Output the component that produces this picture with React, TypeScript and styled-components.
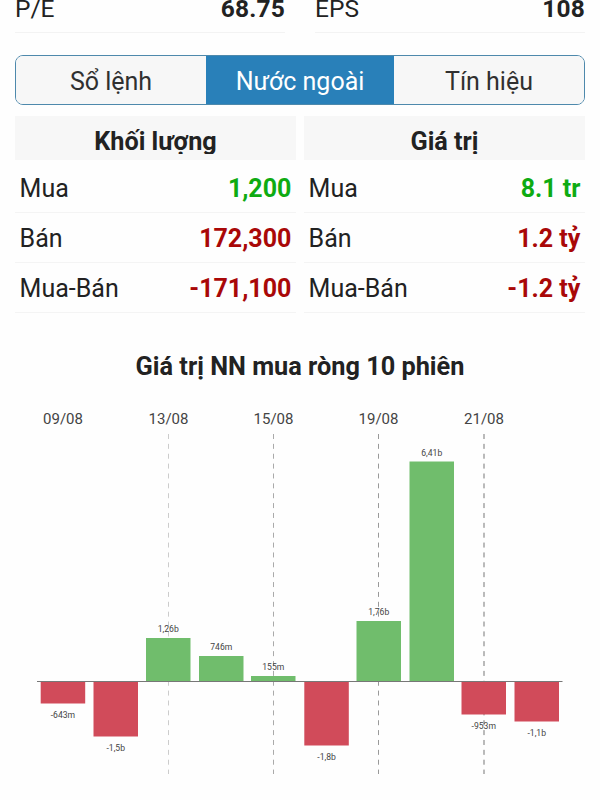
import React from "react";
import styled, { createGlobalStyle } from "styled-components";

const GlobalStyle = createGlobalStyle`
  * { box-sizing: border-box; }
  html, body { margin: 0; background: #fefefe; }
  body { font-family: Roboto, "Noto Sans", sans-serif; color: #222; overflow: hidden; }
`;

const Screen = styled.main`
  width: 600px;
  height: 800px;
  overflow: hidden;
  display: flex;
  flex-direction: column;
`;

const Ratios = styled.section`
  display: grid;
  grid-template-columns: 270px 270px;
  column-gap: 30px;
  padding: 0 15px;
  height: 33px;
`;

const Ratio = styled.div`
  display: flex;
  justify-content: space-between;
  height: 33px;
  border-bottom: 1px solid #f3f3f3;
  font-size: 24.5px;
  line-height: 28px;
`;

const RatioText = styled.span<{ $strong?: boolean }>`
  margin-top: -5px;
  font-weight: ${(p) => (p.$strong ? 700 : 400)};
  letter-spacing: ${(p) => (p.$strong ? "0.2px" : "0")};
`;

const Tabs = styled.nav`
  display: grid;
  grid-template-columns: 190px 188px 1fr;
  width: 570px;
  height: 50px;
  margin: 22px 0 0 15px;
  border: 1px solid #4e89ac;
  border-radius: 8px;
  overflow: hidden;
`;

const Tab = styled.button<{ $active?: boolean }>`
  border: 0;
  padding: 4px 0 0;
  font: 400 25px/44px Roboto, "Noto Sans", sans-serif;
  color: ${(p) => (p.$active ? "#fff" : "#303030")};
  background: ${(p) => (p.$active ? "#2980b9" : "#f7f7f7")};
`;

const Tables = styled.section`
  display: grid;
  grid-template-columns: 281px 281px;
  column-gap: 8px;
  margin: 11px 0 0 15px;
`;

const TableHead = styled.h2`
  margin: 0 0 3px;
  height: 44px;
  padding-top: 12px;
  text-align: center;
  background: #f7f7f7;
  font-size: 25.2px;
  line-height: 28px;
  font-weight: 700;
`;

const HeadText = styled.span`
  display: block;
  height: 26px;
  overflow: hidden;
`;

const Row = styled.div`
  display: flex;
  justify-content: space-between;
  height: 50px;
  padding: 2px 4.6px 0;
  border-bottom: 1px solid #f4f4f4;
  font-size: 25px;
  line-height: 48px;
`;

const Value = styled.strong<{ $tone: "up" | "down" }>`
  font-weight: 700;
  color: ${(p) => (p.$tone === "up" ? "#0eab12" : "#a90808")};
`;

const ChartTitle = styled.h1`
  margin: 40px 0 0;
  text-align: center;
  font-size: 25.3px;
  line-height: 28px;
  font-weight: 700;
`;

const Chart = styled.svg`
  display: block;
  width: 600px;
  height: 400px;
  margin-top: 19px;
  flex: none;
`;

const DateLabel = styled.text`
  font-size: 15px;
  fill: #444;
  text-anchor: middle;
`;

const BarLabel = styled.text`
  font-size: 8.6px;
  fill: #444;
  text-anchor: middle;
`;

const tables: { title: string; rows: [string, string, "up" | "down"][] }[] = [
  { title: "Khối lượng", rows: [["Mua", "1,200", "up"], ["Bán", "172,300", "down"], ["Mua-Bán", "-171,100", "down"]] },
  { title: "Giá trị", rows: [["Mua", "8.1 tr", "up"], ["Bán", "1.2 tỷ", "down"], ["Mua-Bán", "-1.2 tỷ", "down"]] },
];

const dates = [
  { x: 63, label: "09/08" },
  { x: 168.5, label: "13/08", line: "#ccc" },
  { x: 273.5, label: "15/08", line: "#aaa" },
  { x: 378.5, label: "19/08", line: "#999" },
  { x: 484, label: "21/08", line: "#777" },
];

const bars = [
  { x: 40.7, h: -22, label: "-643m" },
  { x: 93.5, h: -55, label: "-1,5b" },
  { x: 146, h: 43.5, label: "1,26b" },
  { x: 199, h: 25.5, label: "746m" },
  { x: 251, h: 5.5, label: "155m" },
  { x: 304.3, h: -64, label: "-1,8b" },
  { x: 356.5, h: 60.5, label: "1,76b" },
  { x: 409.5, h: 220, label: "6,41b" },
  { x: 461.5, h: -33, label: "-953m" },
  { x: 514.5, h: -40, label: "-1,1b" },
];

const zero = 281.5;

export default function App() {
  return (
    <Screen>
      <GlobalStyle />
      <Ratios>
        <Ratio><RatioText>P/E</RatioText><RatioText $strong>68.75</RatioText></Ratio>
        <Ratio><RatioText>EPS</RatioText><RatioText $strong>108</RatioText></Ratio>
      </Ratios>
      <Tabs>
        <Tab>Sổ lệnh</Tab>
        <Tab $active>Nước ngoài</Tab>
        <Tab>Tín hiệu</Tab>
      </Tabs>
      <Tables>
        {tables.map((t) => (
          <div key={t.title}>
            <TableHead><HeadText>{t.title}</HeadText></TableHead>
            {t.rows.map(([name, value, tone]) => (
              <Row key={name}><span>{name}</span><Value $tone={tone}>{value}</Value></Row>
            ))}
          </div>
        ))}
      </Tables>
      <ChartTitle>Giá trị NN mua ròng 10 phiên</ChartTitle>
      <Chart viewBox="0 0 600 400">
        {dates.map((d) => (
          <g key={d.label}>
            <DateLabel x={d.x} y={24}>{d.label}</DateLabel>
            {d.line && <line x1={d.x} x2={d.x} y1={34} y2={374} stroke={d.line} strokeDasharray="5 4.87" />}
          </g>
        ))}
        {bars.map((b) => (
          <g key={b.x}>
            <rect x={b.x} y={b.h > 0 ? zero - b.h : zero} width={44.5} height={Math.abs(b.h)} fill={b.h > 0 ? "#70bd6c" : "#d14b5a"} />
            <BarLabel x={b.x + 22.25} y={b.h > 0 ? zero - b.h - 6 : zero - b.h + 14}>{b.label}</BarLabel>
          </g>
        ))}
        <line x1={37} x2={562.5} y1={zero} y2={zero} stroke="#777" />
      </Chart>
    </Screen>
  );
}
